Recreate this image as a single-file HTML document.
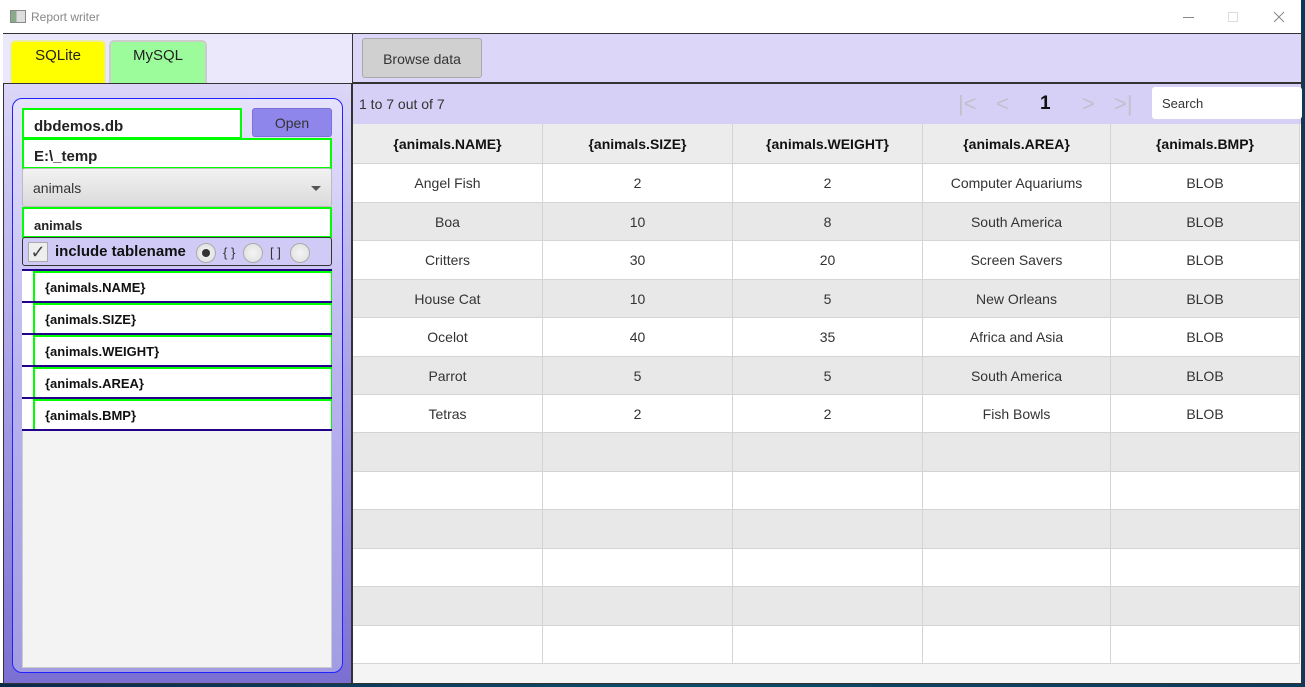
<!DOCTYPE html>
<html><head><meta charset="utf-8"><style>
*{box-sizing:border-box;margin:0;padding:0}
body{width:1305px;height:687px;overflow:hidden;position:relative;background:linear-gradient(90deg,#0b2a4a,#0d4a6a 50%,#0b3a5a);font-family:"Liberation Sans",sans-serif}
.a{position:absolute}
.t{font-size:14px;color:#222}
.f{position:absolute;background:#fff;border:2px solid #00ff00;font-weight:bold;font-size:15px;color:#222;padding-left:10px;padding-top:5px;display:flex;align-items:center}
.li{position:absolute;left:22px;width:310px;height:32px;background:#fff;border-bottom:2px solid #22008a}
.li div{position:absolute;left:11px;top:0;right:0;bottom:0;border:2px solid #00ff00;border-right-width:1px;border-bottom:none;font-weight:bold;font-size:13px;padding-left:10px;display:flex;align-items:center;color:#111}
.row{position:absolute;left:353px;width:947px;display:flex;border-bottom:1px solid #d4d4d4}
.row div{border-right:1px solid #d4d4d4;display:flex;align-items:center;justify-content:center;font-size:14px;color:#333}
.c1{width:190px}.c2{width:190px}.c3{width:190px}.c4{width:188px}.c5{width:189px}
.rad{position:absolute;top:243px;width:20px;height:20px;border-radius:50%;background:radial-gradient(#f4f4f4,#ddd);border:1px solid #aaa}
.pg{position:absolute;top:91px;font-size:22px;color:#c0c0cc;font-weight:300}
</style></head><body>
<div class="a" style="left:0;top:0;width:1301px;height:683px;background:#fff"></div>
<div class="a" style="left:10px;top:10px;width:16px;height:13px;border:1px solid #888;background:linear-gradient(90deg,#8a8 40%,#ddd 40%)"></div>
<div class="a" style="left:31px;top:10px;font-size:12px;color:#888">Report writer</div>
<div class="a" style="left:1183px;top:17px;width:11px;height:1px;background:#888"></div>
<div class="a" style="left:1228px;top:12px;width:10px;height:10px;border:1px solid #ddd"></div>
<svg class="a" style="left:1273px;top:11px" width="12" height="12"><path d="M1 1L11 11M11 1L1 11" stroke="#888" stroke-width="1"/></svg>

<div class="a" style="left:3px;top:33px;width:349px;height:50px;background:#ece8fb;border-top:1px solid #333"></div>
<div class="a t" style="left:10px;top:40px;width:96px;height:43px;background:#ffff00;border:2px solid #ececa0;border-bottom:none;border-radius:5px 5px 0 0;text-align:center;padding-top:5px;font-size:15px">SQLite</div>
<div class="a t" style="left:109px;top:40px;width:98px;height:43px;background:#9cfc9c;border:2px solid #ccc;border-bottom:none;border-radius:5px 5px 0 0;text-align:center;padding-top:5px;font-size:15px">MySQL</div>

<div class="a" style="left:3px;top:83px;width:349px;height:601px;background:linear-gradient(#dcd7f8,#a8a0e6 50%,#7b70d2);border:1px solid #333"></div>
<div class="a" style="left:12px;top:98px;width:331px;height:575px;border:1px solid #2222ff;border-radius:10px;background:linear-gradient(#e6e2fb,#b8b2ee 50%,#a29ce2)"></div>
<div class="a" style="left:22px;top:270px;width:310px;height:398px;background:#f3f3f3;border:1px solid #ccc"></div>

<div class="f" style="left:22px;top:108px;width:220px;height:31px">dbdemos.db</div>
<div class="a" style="left:252px;top:108px;width:80px;height:29px;background:#8e86ea;border:1px solid #7a72d8;border-radius:3px;text-align:center;padding-top:6px;font-size:14px;color:#333">Open</div>
<div class="f" style="left:22px;top:138px;width:310px;height:31px">E:\_temp</div>
<div class="a" style="left:22px;top:168px;width:310px;height:39px;background:linear-gradient(#f2f2f2,#dadada);border:1px solid #bbb;border-radius:3px;font-size:14px;color:#333;padding:11px 0 0 10px">animals<span style="position:absolute;right:10px;top:17px;border:5px solid transparent;border-top:5px solid #555;border-bottom:none"></span></div>
<div class="f" style="left:22px;top:207px;width:310px;height:31px;font-size:13px">animals</div>
<div class="a" style="left:22px;top:237px;width:310px;height:29px;background:#cfcbf6;border:1px solid #333;border-radius:3px"></div>
<div class="a" style="left:28px;top:242px;width:20px;height:20px;background:#eee;border:1px solid #aaa;font-size:18px;line-height:18px;text-align:center;color:#444">✓</div>
<div class="a" style="left:55px;top:243px;font-weight:bold;font-size:15px;color:#111">include tablename</div>
<div class="rad" style="left:196px"><div style="position:absolute;left:5px;top:5px;width:8px;height:8px;border-radius:50%;background:#333"></div></div>
<div class="a" style="left:223px;top:245px;font-size:13px;color:#333">{ }</div>
<div class="rad" style="left:243px"></div>
<div class="a" style="left:270px;top:245px;font-size:13px;color:#333">[ ]</div>
<div class="rad" style="left:290px"></div>

<div class="a" style="left:22px;top:269px;width:310px;height:2px;background:#22008a"></div>
<div class="li" style="top:271px"><div>{animals.NAME}</div></div>
<div class="li" style="top:303px"><div>{animals.SIZE}</div></div>
<div class="li" style="top:335px"><div>{animals.WEIGHT}</div></div>
<div class="li" style="top:367px"><div>{animals.AREA}</div></div>
<div class="li" style="top:399px"><div>{animals.BMP}</div></div>

<div class="a" style="left:352px;top:33px;width:950px;height:50px;background:#dcd6f8;border:1px solid #333"></div>
<div class="a" style="left:362px;top:38px;width:120px;height:40px;background:#d0d0d0;border:1px solid #aaa;border-radius:3px;text-align:center;padding-top:12px;font-size:14px;color:#333">Browse data</div>
<div class="a" style="left:352px;top:83px;width:950px;height:601px;background:#fff;border:1px solid #333"></div>
<div class="a" style="left:353px;top:84px;width:948px;height:40px;background:#d6d0f6"></div>
<div class="a" style="left:359px;top:96px;font-size:14px;color:#333">1 to 7 out of 7</div>
<div class="pg" style="left:958px">|&lt;</div>
<div class="pg" style="left:996px">&lt;</div>
<div class="a" style="left:1040px;top:93px;font-size:19px;font-weight:bold;color:#111">1</div>
<div class="pg" style="left:1082px">&gt;</div>
<div class="pg" style="left:1114px">&gt;|</div>
<div class="a" style="left:1152px;top:87px;width:150px;height:32px;background:#fff;border-radius:3px;font-size:13px;color:#333;padding:9px 0 0 10px">Search</div>

<div class="row" style="top:124px;height:40px;background:#ececec"><div class="c1" style="font-weight:bold;color:#111">{animals.NAME}</div><div class="c2" style="font-weight:bold;color:#111">{animals.SIZE}</div><div class="c3" style="font-weight:bold;color:#111">{animals.WEIGHT}</div><div class="c4" style="font-weight:bold;color:#111">{animals.AREA}</div><div class="c5" style="font-weight:bold;color:#111">{animals.BMP}</div></div>
<div class="row" style="top:164px;height:39px;background:#fff"><div class="c1">Angel Fish</div><div class="c2">2</div><div class="c3">2</div><div class="c4">Computer Aquariums</div><div class="c5">BLOB</div></div>
<div class="row" style="top:203px;height:38px;background:#e8e8e8"><div class="c1">Boa</div><div class="c2">10</div><div class="c3">8</div><div class="c4">South America</div><div class="c5">BLOB</div></div>
<div class="row" style="top:241px;height:39px;background:#fff"><div class="c1">Critters</div><div class="c2">30</div><div class="c3">20</div><div class="c4">Screen Savers</div><div class="c5">BLOB</div></div>
<div class="row" style="top:280px;height:38px;background:#e8e8e8"><div class="c1">House Cat</div><div class="c2">10</div><div class="c3">5</div><div class="c4">New Orleans</div><div class="c5">BLOB</div></div>
<div class="row" style="top:318px;height:39px;background:#fff"><div class="c1">Ocelot</div><div class="c2">40</div><div class="c3">35</div><div class="c4">Africa and Asia</div><div class="c5">BLOB</div></div>
<div class="row" style="top:357px;height:38px;background:#e8e8e8"><div class="c1">Parrot</div><div class="c2">5</div><div class="c3">5</div><div class="c4">South America</div><div class="c5">BLOB</div></div>
<div class="row" style="top:395px;height:38px;background:#fff"><div class="c1">Tetras</div><div class="c2">2</div><div class="c3">2</div><div class="c4">Fish Bowls</div><div class="c5">BLOB</div></div>
<div class="row" style="top:433px;height:39px;background:#e8e8e8"><div class="c1"></div><div class="c2"></div><div class="c3"></div><div class="c4"></div><div class="c5"></div></div>
<div class="row" style="top:472px;height:38px;background:#fff"><div class="c1"></div><div class="c2"></div><div class="c3"></div><div class="c4"></div><div class="c5"></div></div>
<div class="row" style="top:510px;height:39px;background:#e8e8e8"><div class="c1"></div><div class="c2"></div><div class="c3"></div><div class="c4"></div><div class="c5"></div></div>
<div class="row" style="top:549px;height:38px;background:#fff"><div class="c1"></div><div class="c2"></div><div class="c3"></div><div class="c4"></div><div class="c5"></div></div>
<div class="row" style="top:587px;height:39px;background:#e8e8e8"><div class="c1"></div><div class="c2"></div><div class="c3"></div><div class="c4"></div><div class="c5"></div></div>
<div class="row" style="top:626px;height:38px;background:#fff"><div class="c1"></div><div class="c2"></div><div class="c3"></div><div class="c4"></div><div class="c5"></div></div>
<div class="a" style="left:353px;top:664px;width:948px;height:19px;background:#f4f4f4"></div>
</body></html>
